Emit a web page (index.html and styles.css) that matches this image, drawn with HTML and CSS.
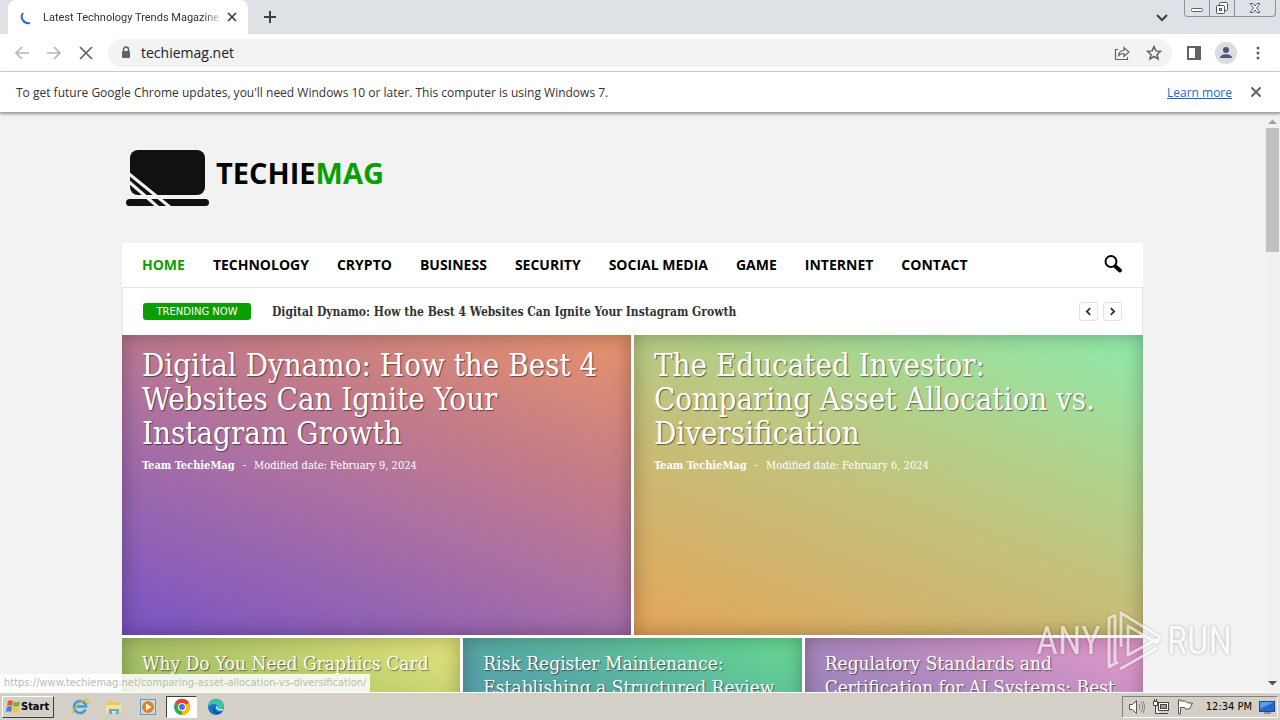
FILE: index.html
```html
<!DOCTYPE html>
<html lang="en">
<head>
  <meta charset="UTF-8">
  <meta name="viewport" content="width=device-width, initial-scale=1.0">
  <title>Latest Technology Trends Magazine</title>
  <link rel="stylesheet" href="styles.css">
</head>
<body>
  <div class="tab-strip">
    <div class="tab">
      <svg class="spinner" width="16" height="16" viewBox="0 0 16 16"><path d="M3 4a6.500 6.500 0 0 0 7 10" fill="none" stroke="#3367d6" stroke-width="2"/></svg>
      <span class="tab-title">Latest Technology Trends Magazine -</span>
      <button class="icon-btn" aria-label="Close tab"><svg width="16" height="16" viewBox="0 0 16 16"><path d="M4 4l8 8M12 4l-8 8" stroke="#3c4043" stroke-width="1.700"/></svg></button>
    </div>
    <button class="icon-btn new-tab" aria-label="New tab"><svg width="16" height="16" viewBox="0 0 16 16"><path d="M8 2v12M2 8h12" stroke="#3c4043" stroke-width="2"/></svg></button>
    <button class="icon-btn tab-search" aria-label="Search tabs"><svg width="16" height="16" viewBox="0 0 16 16"><path d="M3 6l5 5 5-5" fill="none" stroke="#3c4043" stroke-width="2"/></svg></button>
    <div class="window-controls">
      <button aria-label="Minimize"><svg width="24" height="16" viewBox="0 0 24 16"><rect x="6.500" y="8.500" width="11" height="3" rx="1" fill="#fff" stroke="#5a6270"/></svg></button>
      <button aria-label="Restore"><svg width="24" height="16" viewBox="0 0 24 16"><g fill="#fff" stroke="#4a5260"><rect x="9.500" y="2.500" width="8" height="8" rx="1"/><rect x="6.500" y="5.500" width="8" height="8" rx="1"/><rect x="9.500" y="8.500" width="2" height="2"/></g></svg></button>
      <button aria-label="Close"><svg width="40" height="16" viewBox="0 0 40 16"><path d="M15 3.500h3l2 2.500 2-2.500h3l-3.500 4.500 3.500 4.500h-3l-2-2.500-2 2.500h-3l3.500-4.500z" fill="#fff" stroke="#5a6270"/></svg></button>
    </div>
  </div>

  <div class="toolbar">
    <button class="icon-btn" aria-label="Back"><svg width="16" height="16" viewBox="0 0 16 16"><path d="M15 8H2M8 2L2 8l6 6" fill="none" stroke="#b4b6b9" stroke-width="1.700"/></svg></button>
    <button class="icon-btn" aria-label="Forward"><svg width="16" height="16" viewBox="0 0 16 16"><path d="M1 8h13M8 2l6 6-6 6" fill="none" stroke="#b4b6b9" stroke-width="1.700"/></svg></button>
    <button class="icon-btn" aria-label="Stop"><svg width="16" height="16" viewBox="0 0 16 16"><path d="M2 2l12 12M14 2L2 14" stroke="#5f6368" stroke-width="1.700"/></svg></button>
    <div class="omnibox">
      <svg width="10" height="14" viewBox="0 0 10 14"><path d="M2.500 6V3.500a2.500 2.500 0 0 1 5 0V6" fill="none" stroke="#5f6368" stroke-width="1.500"/><rect x="1" y="5" width="8" height="7" rx="1" fill="#5f6368"/></svg>
      <input type="text" value="techiemag.net" aria-label="Address">
      <button class="icon-btn" aria-label="Share"><svg width="16" height="16" viewBox="0 0 16 16" fill="none" stroke="#5f6368" stroke-width="1.200"><path d="M4 4.500H1.500v10h12V12M4.500 10.500c.5-4 2.500-5 5.500-5V2.500l5 4.500-5 4.500V8.500c-2.500 0-4 .5-5.500 2z"/></svg></button>
      <button class="icon-btn" aria-label="Bookmark"><svg width="16" height="16" viewBox="0 0 16 16"><path d="M8 1.500l1.900 4.400 4.700.4-3.600 3.100 1.100 4.600L8 11.500 3.900 14 5 9.400 1.400 6.300l4.700-.4z" fill="none" stroke="#5f6368" stroke-width="1.500"/></svg></button>
    </div>
    <button class="icon-btn" aria-label="Side panel"><svg width="16" height="16" viewBox="0 0 16 16"><rect x="2" y="2" width="12" height="12" fill="none" stroke="#5f6368" stroke-width="2"/><path d="M9 2h5v12H9z" fill="#5f6368"/></svg></button>
    <button class="icon-btn avatar" aria-label="Profile"><svg width="22" height="22" viewBox="0 0 22 22"><circle cx="11" cy="11" r="11" fill="#dadce0"/><circle cx="11" cy="8" r="3" fill="#4a5878"/><path d="M5 16c0-5 12-5 12 0z" fill="#4a5878"/></svg></button>
    <button class="icon-btn" aria-label="Menu"><svg width="16" height="16" viewBox="0 0 16 16" fill="#5f6368"><circle cx="8" cy="3" r="1.500"/><circle cx="8" cy="8" r="1.500"/><circle cx="8" cy="13" r="1.500"/></svg></button>
  </div>

  <div class="infobar">
    <span>To get future Google Chrome updates, you'll need Windows 10 or later. This computer is using Windows 7.</span>
    <a href="#">Learn more</a>
    <button class="icon-btn" aria-label="Dismiss"><svg width="16" height="16" viewBox="0 0 16 16"><path d="M3.500 3.500l9 9M12.500 3.500l-9 9" stroke="#5f6368" stroke-width="2"/></svg></button>
  </div>

  <div class="viewport">
    <main class="page">
      <header class="site-header">
        <a class="logo" href="#">
          <svg width="86" height="60" viewBox="0 0 86 60"><rect x="5" y="2" width="75" height="45" rx="8" fill="#111"/><rect x="1" y="51" width="83" height="7" rx="3.500" fill="#111"/><path d="M3 25l43 35M3 33l31 27" stroke="#f2f2f2" stroke-width="3"/></svg>
          <span class="logo-text">TECHIE<span class="green">MAG</span></span>
        </a>
      </header>

      <nav class="main-nav">
        <a class="active" href="#">HOME</a>
        <a href="#">TECHNOLOGY</a>
        <a href="#">CRYPTO</a>
        <a href="#">BUSINESS</a>
        <a href="#">SECURITY</a>
        <a href="#">SOCIAL MEDIA</a>
        <a href="#">GAME</a>
        <a href="#">INTERNET</a>
        <a href="#">CONTACT</a>
        <button class="icon-btn search" aria-label="Search"><svg width="20" height="20" viewBox="0 0 20 20"><circle cx="8" cy="7.500" r="5.500" fill="none" stroke="#000" stroke-width="2"/><path d="M12.500 12.500l4.500 4" stroke="#000" stroke-width="4" stroke-linecap="round"/></svg></button>
      </nav>

      <section class="trending">
        <span class="trending-label">TRENDING NOW</span>
        <a class="trending-title" href="#">Digital Dynamo: How the Best 4 Websites Can Ignite Your Instagram Growth</a>
        <button aria-label="Previous"><svg width="9" height="9" viewBox="0 0 8 8"><path d="M5.500 1l-3 3 3 3" fill="none" stroke="#333" stroke-width="1.600"/></svg></button>
        <button aria-label="Next"><svg width="9" height="9" viewBox="0 0 8 8"><path d="M2.500 1l3 3-3 3" fill="none" stroke="#333" stroke-width="1.600"/></svg></button>
      </section>

      <section class="grid grid-big">
        <article class="tile tile-violet">
          <h2><a href="#">Digital Dynamo: How the Best 4 Websites Can Ignite Your Instagram Growth</a></h2>
          <p class="meta"><b>Team TechieMag</b><span>-</span><time>Modified date: February 9, 2024</time></p>
        </article>
        <article class="tile tile-orange">
          <h2><a href="#">The Educated Investor: Comparing Asset Allocation vs. Diversification</a></h2>
          <p class="meta"><b>Team TechieMag</b><span>-</span><time>Modified date: February 6, 2024</time></p>
        </article>
      </section>

      <section class="grid grid-small">
        <article class="tile tile-lime"><h3><a href="#">Why Do You Need Graphics Card</a></h3></article>
        <article class="tile tile-teal"><h3><a href="#">Risk Register Maintenance: Establishing a Structured Review</a></h3></article>
        <article class="tile tile-pink"><h3><a href="#">Regulatory Standards and Certification for AI Systems: Best</a></h3></article>
      </section>
    </main>

    <div class="scrollbar">
      <svg width="15" height="15" viewBox="0 0 15 15"><path d="M3 11l4.500-4.500L12 11z" fill="#a3a3a3"/></svg>
      <div class="thumb"></div>
      <svg width="15" height="15" viewBox="0 0 15 15"><path d="M3 4l4.500 4.500L12 4z" fill="#505050"/></svg>
    </div>

    <div class="status">https://www.techiemag.net/comparing-asset-allocation-vs-diversification/</div>
    <div class="watermark">
      <span>ANY</span>
      <svg width="58" height="64" viewBox="0 0 58 64" fill="none" stroke="#fff" stroke-width="3" stroke-linejoin="round"><path d="M10 6L4 9v49l9-5M10 6v47"/><path d="M16 38V4l39 24-3 6-29-17v29l29-16M15 60l37-21"/></svg>
      <span>RUN</span>
    </div>
  </div>

  <footer class="taskbar">
    <button class="start"><svg width="16" height="16" viewBox="0 0 16 16"><path d="M3 2c2-1 3-1 5 0L7 7C5 6 4 6 2 7z" fill="#e2572b"/><path d="M9 2.500c2 1 4 1 6 0L14 7c-2 1-4 1-6 0z" fill="#74b532"/><path d="M2 8c2-1 3-1 5 0l-1 5c-2-1-3-1-5 0z" fill="#3b83d6"/><path d="M8 8.500c2 1 4 1 6 0L13 13c-2 1-4 1-6 0z" fill="#f7c32e"/></svg>Start</button>
    <div class="quick-launch">
      <button aria-label="Internet Explorer"><svg width="18" height="18" viewBox="0 0 18 18"><path d="M14.500 11.500a6 6 0 1 1 .5-3H5" fill="none" stroke="#3b9ae0" stroke-width="2.600"/><path d="M2 16C-1 13 12 0 17 2c1 1 0 3-1 4" fill="none" stroke="#e8b93a" stroke-width="1.300"/></svg></button>
      <button aria-label="Explorer"><svg width="18" height="18" viewBox="0 0 18 18"><path d="M2 3l5-1 1 2h7v11H2z" fill="#edc95c"/><path d="M1 7h15v8H1z" fill="#f7e397"/><path d="M4 16v-5h10v5h-3v-3H7v3z" fill="#5faee3"/></svg></button>
      <button aria-label="Media Player"><svg width="18" height="18" viewBox="0 0 18 18"><rect x="1.500" y="1.500" width="15" height="15" fill="#c6ddf0" stroke="#5d9bce"/><circle cx="9" cy="9" r="6" fill="#ee7f16"/><path d="M7 5.500l5.500 3.500L7 12.500z" fill="#fff"/></svg></button>
      <button class="running" aria-label="Chrome"><svg width="18" height="18" viewBox="0 0 18 18"><circle cx="9" cy="9" r="8" fill="#33a852"/><path d="M9 9L2 5a8 8 0 0 1 14 0z" fill="#ea4335"/><path d="M9 9l7-4a8 8 0 0 1-7 12z" fill="#fbbc05"/><circle cx="9" cy="9" r="4" fill="#fff"/><circle cx="9" cy="9" r="3" fill="#3b78e7"/></svg></button>
      <button aria-label="Edge"><svg width="18" height="18" viewBox="0 0 18 18"><circle cx="9" cy="9" r="8" fill="#1674c9"/><path d="M1 9C2-1 16-1 17 8c0 4-5 4-6 2 1-4-6-6-10-1z" fill="#38c5a8"/><path d="M8 8c-3 4 2 8 7 6-6 5-12-2-7-6z" fill="#0b4a94"/><path d="M9 8c3 0 1 3 3 3h5c-2 3-9 2-8-3z" fill="#d5e9ee"/></svg></button>
    </div>
    <div class="tray">
      <svg width="18" height="18" viewBox="0 0 18 18" fill="#fff" stroke="#555"><path d="M1.500 6.500h3l4-4v13l-4-4h-3z"/><path d="M11 6c1 2 1 4 0 6M13 4c2 3 2 7 0 10M15 3c2 4 2 8 0 12" fill="none" stroke="#888"/></svg>
      <svg width="18" height="18" viewBox="0 0 18 18" fill="#fff" stroke="#444"><rect x="6.500" y="4.500" width="10" height="8"/><rect x="8.500" y="6.500" width="6" height="4" fill="#999"/><path d="M8 15.500h8M3.500 8v7.500H8M1.500 3.500h4v4h-4zM2.500 1v2M4.500 1v2"/></svg>
      <svg width="18" height="18" viewBox="0 0 18 18" fill="#fff" stroke="#555"><path d="M2.500 2v14h2V9.500h4l1 1.500h4l3-6h-5l-2-2h-5V2z"/></svg>
      <span class="clock">12:34 PM</span>
      <svg width="18" height="18" viewBox="0 0 18 18"><rect x="1.500" y="3.500" width="15" height="10" fill="#2368c4" stroke="#174a94"/><path d="M2 4h14L2 11z" fill="#5c9be6"/><path d="M6 15h7" stroke="#555"/></svg>
    </div>
  </footer>
</body>
</html>
```
FILE: styles.css
```css
* {
  box-sizing: border-box;
}
body {
  margin: 0;
  height: 100vh;
  display: flex;
  flex-direction: column;
  overflow: hidden;
  background-color: #f2f2f2;
  font-family: "DejaVu Sans Condensed", "DejaVu Sans", sans-serif;
  font-size: 12px;
  color: #333;
}
a {
  color: inherit;
  text-decoration: none;
}
button {
  padding: 0;
  border: none;
  background: none;
  font: inherit;
  color: inherit;
}
svg {
  display: block;
  flex: none;
}
.icon-btn {
  display: flex;
  flex: none;
}

/* browser chrome */
.tab-strip {
  display: flex;
  align-items: center;
  height: 34px;
  padding: 0 4px 0 8px;
  background-color: #dee1e6;
}
.tab {
  display: flex;
  align-items: center;
  width: 240px;
  height: 34px;
  padding: 0 8px 0 12px;
  background-color: #fff;
  border-radius: 8px 8px 0 0;
}
.tab-title {
  flex: 1;
  margin-left: 7px;
  overflow: hidden;
  white-space: nowrap;
  font-family: Roboto, sans-serif;
  font-size: 11px;
  -webkit-mask-image: linear-gradient(to right, #000 88%, transparent);
  mask-image: linear-gradient(to right, #000 88%, transparent);
}
.new-tab {
  margin-left: 14px;
}
.tab-search {
  margin-left: auto;
  margin-right: 14px;
}
.window-controls {
  display: flex;
  align-self: flex-start;
  border: 1px solid #8c929c;
  border-top: none;
  border-radius: 0 0 4px 4px;
}
.window-controls button + button {
  border-left: 1px solid #8c929c;
}
.toolbar {
  display: flex;
  align-items: center;
  gap: 16px;
  height: 38px;
  padding: 0 14px;
  background-color: #fff;
  border-bottom: 1px solid #d5d7da;
}
.omnibox {
  display: flex;
  flex: 1;
  align-items: center;
  gap: 16px;
  height: 28px;
  margin: 0 -2px;
  padding: 0 10px 0 13px;
  border-radius: 14px;
  background-color: #f1f3f4;
}
.omnibox input {
  flex: 1;
  min-width: 0;
  margin-left: -6px;
  padding: 0;
  border: none;
  outline: none;
  background: none;
  font: 14px "Open Sans", sans-serif;
  color: #202124;
}
.avatar {
  margin: 0 -3px;
}
.infobar {
  display: flex;
  align-items: center;
  height: 41px;
  padding: 0 16px;
  background-color: #fff;
  border-bottom: 1px solid #a5a5a5;
  box-shadow: 0 1px 3px rgba(0, 0, 0, 0.4);
  font-family: "Open Sans", sans-serif;
  z-index: 1;
}
.infobar a {
  margin-left: auto;
  margin-right: 16px;
  color: #1967d2;
  text-decoration: underline;
}

/* page */
.viewport {
  position: relative;
  display: flex;
  flex: 1;
  min-height: 0;
  overflow: hidden;
}
.page {
  width: 100%;
  max-width: 1021px;
  margin: 0 auto;
}
.site-header {
  display: flex;
  height: 130px;
  padding-top: 35px;
}
.logo {
  display: flex;
  align-items: flex-start;
  gap: 5px;
  margin-left: 3px;
}
.logo-text {
  font: bold 29px/50px "Open Sans", sans-serif;
  color: #000;
}
.green,
.main-nav .active {
  color: #0a9e01;
}
.main-nav {
  display: flex;
  align-items: center;
  gap: 28px;
  height: 44px;
  padding: 0 20px 2px;
  background-color: #fff;
  font: bold 14px "Open Sans", sans-serif;
  color: #000;
}
.search {
  margin-left: auto;
}
.trending {
  display: flex;
  align-items: center;
  gap: 5px;
  height: 48px;
  padding: 0 20px;
  border: 1px solid #e6e6e6;
  border-bottom: none;
  background-color: #fff;
}
.trending-label {
  width: 108px;
  border-radius: 3px;
  background-color: #0a9e01;
  font: 10px/17px "DejaVu Sans", sans-serif;
  color: #fff;
  text-align: center;
}
.trending-title {
  flex: 1;
  margin-left: 16px;
  font-family: "DejaVu Serif Condensed", "DejaVu Serif", serif;
  font-size: 12px;
  font-weight: bold;
}
.trending button {
  display: flex;
  align-items: center;
  justify-content: center;
  width: 19px;
  height: 19px;
  border: 1px solid #e2e2e2;
  border-radius: 3px;
}
.grid {
  display: grid;
  gap: 3px;
  padding-bottom: 3px;
  background-color: #fff;
  font-family: "DejaVu Serif Condensed", "DejaVu Serif", serif;
  color: #fff;
}
.grid-big {
  grid-template-columns: repeat(2, 1fr);
  grid-auto-rows: 300px;
}
.grid-small {
  grid-template-columns: repeat(3, 1fr);
  grid-auto-rows: 200px;
}
.tile {
  padding: 13px 20px;
  box-shadow: inset 0 0 20px rgba(0, 0, 0, 0.3);
}
.tile h2,
.tile h3 {
  margin: 0;
  font-weight: normal;
  text-shadow: 1px 1px 1px rgba(0, 0, 0, 0.5);
}
.tile h2 {
  font-size: 31px;
  line-height: 34px;
}
.tile h3 {
  font-size: 19px;
  line-height: 24px;
}
.meta {
  display: flex;
  gap: 8px;
  margin: 9px 0 0;
  font-size: 11px;
  line-height: 14px;
}
.tile-violet {
  background: linear-gradient(21deg, #7954c4, #ab70a3 45%, #c47c88 68%, #e8936b);
}
.tile-orange {
  background: linear-gradient(21deg, #e4a55a, #c5c07a 45%, #b3cf88 65%, #8eebac);
}
.tile-lime {
  background: linear-gradient(21deg, #6ea653, #a9c467 60%, #e6e67c);
}
.tile-teal {
  background: linear-gradient(21deg, #5487b5, #58a9a5 60%, #68dc90);
}
.tile-pink {
  background: linear-gradient(21deg, #7275bd, #ab88bd 60%, #e79acb);
}
.scrollbar {
  display: flex;
  flex-direction: column;
  width: 15px;
  background-color: #f1f1f1;
}
.thumb {
  height: 124px;
  margin: 0 1px auto;
  background-color: #c1c1c1;
}
.status {
  position: absolute;
  left: 0;
  bottom: 0;
  padding: 0 4px;
  background-color: rgba(255, 255, 255, 0.85);
  font-size: 11px;
  line-height: 18px;
  color: #bbb;
}
.watermark {
  position: absolute;
  right: 48px;
  bottom: 19px;
  display: flex;
  align-items: center;
  gap: 4px;
  font: 38px "Roboto Condensed", Roboto, sans-serif;
  color: #fff;
  opacity: 0.6;
  text-shadow: 0 0 3px rgba(0, 0, 0, 0.5);
}
.watermark svg {
  filter: drop-shadow(0 0 1px rgba(0, 0, 0, 0.4));
}

/* taskbar */
.taskbar {
  display: flex;
  align-items: center;
  height: 28px;
  padding: 0 2px;
  background-color: #d4d0c8;
  border-top: 1px solid #fff;
  color: #000;
}
.start {
  display: flex;
  align-items: center;
  width: 52px;
  height: 22px;
  padding-left: 2px;
  border: 1px solid #fff;
  border-right-color: #404040;
  border-bottom-color: #404040;
  font-weight: bold;
  font-size: 11px;
}
.quick-launch {
  display: flex;
  gap: 3px;
  margin-left: 10px;
}
.quick-launch button {
  display: flex;
  align-items: center;
  justify-content: center;
  width: 31px;
  height: 22px;
}
.quick-launch .running {
  border: 1px solid #404040;
  border-right-color: #fff;
  border-bottom-color: #fff;
  background-color: #fff;
}
.tray {
  display: flex;
  align-items: center;
  gap: 6px;
  height: 22px;
  margin-left: auto;
  padding: 0 1px 0 5px;
  border: 1px solid #808080;
  border-right-color: #fff;
  border-bottom-color: #fff;
}
.clock {
  margin-left: 6px;
  font-size: 11px;
}
```
